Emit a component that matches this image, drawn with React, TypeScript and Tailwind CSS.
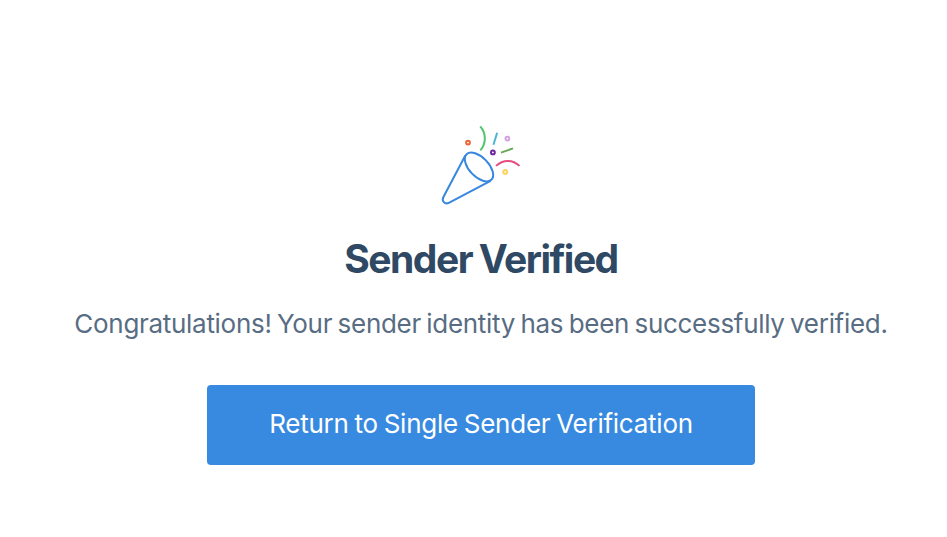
function PartyPopper() {
  return (
    <svg className="h-[100px] w-[98px] shrink-0" viewBox="0 0 98 100" fill="none" strokeWidth="2">
      <g stroke="#3887de">
        <path d="M33.3 39.5 11.3 81.2C9.5 84.8 12.8 88.8 16.8 86.8L58.6 64.8" />
        <ellipse cx="47" cy="51" rx="17.8" ry="9.6" transform="rotate(46 47 51)" />
      </g>
      <path d="M48.2 10.3C54.3 17 54.4 27.5 48.4 34.4" stroke="#55c370" />
      <path d="M65.2 16.8 61.4 28.8" stroke="#4bb6d4" />
      <path d="M69 36.6 81 32.4" stroke="#67a957" />
      <path d="M64 49.9C71 43.2 80.5 43.2 87.5 49.9" stroke="#e54d83" />
      <circle cx="36" cy="26.6" r="1.9" stroke="#ec6536" />
      <circle cx="60.9" cy="36.4" r="1.9" stroke="#6b269b" />
      <circle cx="75.4" cy="22.6" r="1.9" stroke="#d3a3e2" />
      <circle cx="73.2" cy="55.9" r="1.9" stroke="#fbd45d" />
    </svg>
  );
}

export default function App() {
  return (
    <main className="flex h-[537px] w-[947px] flex-col items-center overflow-hidden bg-white pt-[116px] pl-[15px] font-['Inter',sans-serif] whitespace-nowrap">
      <PartyPopper />
      <h1 className="mt-[19px] text-[39px] leading-[48px] font-bold tracking-[-1.5px] text-[#2f4964] [word-spacing:-1px]">
        Sender Verified
      </h1>
      <p className="mt-[21px] text-[26px] leading-10 tracking-[-0.3px] text-[#586d83] [word-spacing:-1.6px]">
        Congratulations! Your sender identity has been successfully verified.
      </p>
      <button className="mt-[41px] h-20 w-[548px] rounded-[4px] bg-[#388ae0] pb-0.5 text-[26px] leading-10 tracking-[-0.25px] text-white [word-spacing:-1.2px]">
        Return to Single Sender Verification
      </button>
    </main>
  );
}
